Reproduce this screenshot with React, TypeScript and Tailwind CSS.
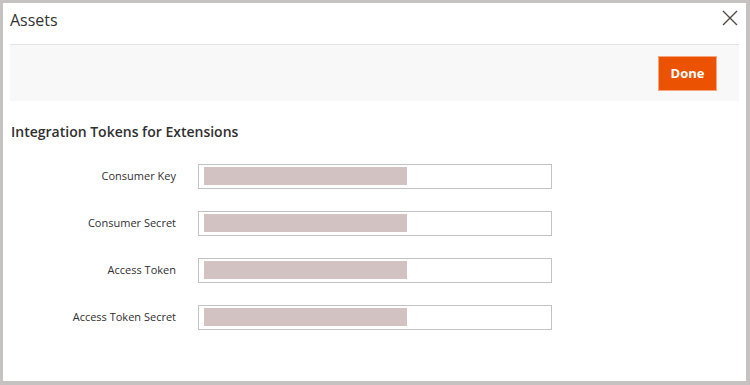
import React from 'react';

const fields = ['Consumer Key', 'Consumer Secret', 'Access Token', 'Access Token Secret'];

export default function App() {
  return (
    <div
      className="w-[750px] h-[385px] bg-[#c6c2c1] pt-[3px] pl-[3px] pr-[4px] pb-[4px]"
      style={{ fontFamily: '"Open Sans", "Noto Sans", sans-serif' }}
    >
      <div className="h-full bg-white px-[7px] relative">
        <h1 className="pt-[5px] h-[41px] text-[16px] leading-[24px] text-[#333333]">Assets</h1>
        <button className="absolute right-[8px] top-[7px] w-[16px] h-[16px] text-[#514943]">
          <svg viewBox="0 0 16 16" width="16" height="16" fill="none" stroke="currentColor" strokeWidth="1.4">
            <path d="M1 1 L15 15 M15 1 L1 15" />
          </svg>
        </button>
        <div className="h-[57px] bg-[#f8f8f8] border-t border-[#e3e3e3] flex items-start justify-end pr-[22px] pt-[11px]">
          <button className="h-[35px] w-[59px] bg-[#eb5202] border border-[#f7a57e] text-white text-[13px] font-bold">
            Done
          </button>
        </div>
        <h2 className="mt-[21px] pl-[1px] text-[14px] leading-[20px] font-semibold text-[#303030]">
          Integration Tokens for Extensions
        </h2>
        <div className="mt-[22px] flex flex-col gap-[22px]">
          {fields.map((f) => (
            <div key={f} className="flex items-center">
              <label className="w-[166px] text-right text-[11px] text-[#303030]">{f}</label>
              <div className="ml-[22px] w-[354px] h-[25px] border border-[#c2c2c2] bg-white pl-[5px] pt-[2px]">
                <div className="w-[203px] h-[18px] bg-[#d2c3c2]" />
              </div>
            </div>
          ))}
        </div>
      </div>
    </div>
  );
}
